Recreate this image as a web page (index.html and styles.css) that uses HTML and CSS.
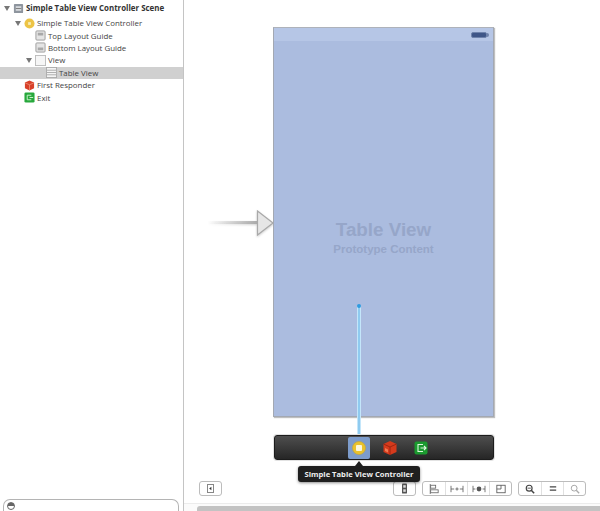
FILE: index.html
```html
<!DOCTYPE html>
<html lang="en">
<head>
    <meta charset="UTF-8">
    <title>Storyboard</title>
    <link rel="stylesheet" href="styles.css">
</head>
<body>
    <aside class="outline">
        <ul class="tree">
            <li class="row row-scene">
                <span class="disclosure"></span>
                <svg class="icon" viewBox="0 0 12 12"><rect x="1" y="1" width="10" height="10" rx="1" fill="#8e959e"/><rect x="3" y="3.5" width="6" height="5" fill="#d5d8dc"/><path d="M3 6h6" stroke="#777" stroke-width="1"/></svg>
                <span class="label">Simple Table View Controller Scene</span>
            </li>
            <li class="row row-controller indent-1">
                <span class="disclosure"></span>
                <svg class="icon" viewBox="0 0 12 12"><circle cx="6" cy="6" r="5.5" fill="#edc445"/><rect x="4.5" y="4.5" width="3" height="3" fill="#f8eeb8"/></svg>
                <span class="label">Simple Table View Controller</span>
            </li>
            <li class="row indent-2">
                <svg class="icon" viewBox="0 0 12 12"><rect x="1" y="1" width="10" height="10" rx="1" fill="#e4e4e4" stroke="#9a9a9a"/><rect x="3" y="3" width="6" height="3" fill="#a8a8a8"/></svg>
                <span class="label">Top Layout Guide</span>
            </li>
            <li class="row indent-2">
                <svg class="icon" viewBox="0 0 12 12"><rect x="1" y="1" width="10" height="10" rx="1" fill="#e4e4e4" stroke="#9a9a9a"/><rect x="3" y="6" width="6" height="3" fill="#a8a8a8"/></svg>
                <span class="label">Bottom Layout Guide</span>
            </li>
            <li class="row indent-view">
                <span class="disclosure"></span>
                <svg class="icon" viewBox="0 0 12 12"><rect x=".5" y=".5" width="11" height="11" fill="#f6f6f6" stroke="#bbb"/></svg>
                <span class="label">View</span>
            </li>
            <li class="row row-selected indent-3">
                <svg class="icon" viewBox="0 0 12 12"><rect x=".5" y=".5" width="11" height="11" fill="#f4f4f4" stroke="#aaa"/><path d="M1 3.5h10M1 6h10M1 8.5h10" stroke="#aaa"/></svg>
                <span class="label">Table View</span>
            </li>
            <li class="row indent-1b">
                <svg class="icon" viewBox="0 0 12 12"><path d="M6 .5l5 2.2v6.4L6 11.5 1 9.1V2.700z" fill="#d8412a"/><path d="M1 3l5 2.200L11 3M6 5.200v6.300" stroke="#f09a80" stroke-width=".8" fill="none"/></svg>
                <span class="label">First Responder</span>
            </li>
            <li class="row indent-1b">
                <svg class="icon" viewBox="0 0 12 12"><rect x=".5" y=".5" width="11" height="11" rx="1.500" fill="#27a83c"/><path d="M8 3.500H3.500v5H8M6 6h4" stroke="#d5f5d5" fill="none"/></svg>
                <span class="label">Exit</span>
            </li>
        </ul>
        <div class="filter">
            <span class="filter-icon"></span>
        </div>
    </aside>

    <main class="editor">
        <div class="canvas">
            <div class="entry-arrow">
                <svg viewBox="0 0 68 28" width="68" height="28">
                    <defs>
                        <linearGradient id="tail" x1="0" x2="1" y1="0" y2="0">
                            <stop offset="0" stop-color="#bbb" stop-opacity="0"/>
                            <stop offset="1" stop-color="#a8a8a8"/>
                        </linearGradient>
                    </defs>
                    <rect x="0" y="12" width="52" height="3" fill="url(#tail)"/>
                    <path d="M50.500 2l15.500 12-15.500 12z" fill="#e6e6e6" stroke="#a9a9a9" stroke-width="1.200"/>
                </svg>
            </div>

            <div class="phone">
                <div class="status-bar"><span class="battery"></span></div>
                <div class="phone-body">
                    <div class="placeholder-title">Table View</div>
                    <div class="placeholder-sub">Prototype Content</div>
                </div>
            </div>

            <div class="segue-line"></div>
            <div class="segue-dot"></div>

            <div class="dock">
                <div class="dock-item dock-selected">
                    <svg viewBox="0 0 16 16" width="16" height="16"><circle cx="8" cy="8" r="6.500" fill="#e9c22e" stroke="#c9a52a" stroke-width=".6"/><rect x="5" y="5" width="6" height="6" rx="1" fill="#fbf7dc"/></svg>
                </div>
                <div class="dock-item">
                    <svg viewBox="0 0 16 16" width="16" height="16"><path d="M8 1l6.500 3v8L8 15l-6.500-3V4z" fill="#d43a1c"/><path d="M1.500 4L8 7l6.500-3M8 7v8" stroke="#8f1f0c" stroke-width=".8" fill="none"/><path d="M3 8l3 1.500v3L3 11z" fill="#f07a52"/></svg>
                </div>
                <div class="dock-item">
                    <svg viewBox="0 0 16 16" width="16" height="16"><rect x="1.500" y="1.500" width="13" height="13" rx="2" fill="#1b9a2f"/><path d="M10 4.500H5v7h5M7.500 8h5M11 6l2 2-2 2" stroke="#dff7df" stroke-width="1.100" fill="none"/></svg>
                </div>
            </div>

            <div class="tooltip">Simple Table View Controller</div>
        </div>

        <div class="toolbar">
            <div class="btn-group">
                <span class="btn btn-single">
                    <svg viewBox="0 0 8 10" width="7" height="9"><rect x=".5" y=".5" width="7" height="9" fill="#fff" stroke="#777"/><path d="M5 3v4L2.500 5z" fill="#333"/></svg>
                </span>
            </div>
            <div class="toolbar-right">
                <div class="btn-group">
                    <span class="btn btn-single">
                        <svg viewBox="0 0 6 12" width="5" height="11"><rect x="0" y="0" width="6" height="12" rx="1" fill="#555"/><rect x="1.500" y="2" width="3" height="3" fill="#ddd"/><rect x="1.500" y="7" width="3" height="3" fill="#ddd"/></svg>
                    </span>
                </div>
                <div class="btn-group">
                    <span class="btn">
                        <svg viewBox="0 0 12 12" width="10" height="10"><path d="M1.500 0v12" stroke="#666"/><rect x="2" y="1.500" width="6" height="3.500" fill="#fff" stroke="#666"/><rect x="2" y="7" width="9" height="3.500" fill="#fff" stroke="#666"/></svg>
                    </span>
                    <span class="btn">
                        <svg viewBox="0 0 16 10" width="14" height="8"><path d="M.500 1v8M15.500 1v8M.500 5h4M11.500 5h4M8 3v4M6 5h4" stroke="#555" fill="none"/></svg>
                    </span>
                    <span class="btn">
                        <svg viewBox="0 0 16 10" width="14" height="8"><path d="M.500 1v8M15.500 1v8M.500 5h3M12.500 5h3" stroke="#555" fill="none"/><circle cx="8" cy="5" r="3" fill="#555"/></svg>
                    </span>
                    <span class="btn">
                        <svg viewBox="0 0 12 12" width="10" height="10"><rect x="1" y="1.500" width="10" height="9" fill="#fff" stroke="#555"/><path d="M1 6h5V1.500" stroke="#555" fill="none"/></svg>
                    </span>
                </div>
                <div class="btn-group">
                    <span class="btn">
                        <svg viewBox="0 0 12 12" width="10" height="10"><circle cx="5" cy="5" r="3.500" fill="none" stroke="#444" stroke-width="1.400"/><path d="M3 5h4" stroke="#444"/><path d="M7.500 7.500L11 11" stroke="#444" stroke-width="1.800"/></svg>
                    </span>
                    <span class="btn">
                        <svg viewBox="0 0 10 6" width="8" height="5"><path d="M1 1h8M1 5h8" stroke="#444" stroke-width="1.400"/></svg>
                    </span>
                    <span class="btn">
                        <svg viewBox="0 0 12 12" width="10" height="10"><circle cx="5" cy="5" r="3.500" fill="none" stroke="#aaa" stroke-width="1.200"/><path d="M7.500 7.500L11 11" stroke="#aaa" stroke-width="1.600"/></svg>
                    </span>
                </div>
            </div>
        </div>

        <div class="scrollbar"><div class="scroll-thumb"></div></div>
    </main>
</body>
</html>
```

FILE: styles.css
```css
* {
    box-sizing: border-box;
    margin: 0;
    padding: 0;
}

html, body {
    height: 100%;
    overflow: hidden;
}

body {
    display: flex;
    width: 600px;
    height: 511px;
    background-color: white;
    font-family: "Open Sans", "DejaVu Sans", sans-serif;
    color: #444;
}

/* left outline */
.outline {
    width: 184px;
    flex-shrink: 0;
    border-right: 1px solid #c4c4c4;
    display: flex;
    flex-direction: column;
    justify-content: space-between;
}

.tree {
    list-style: none;
    padding-top: 2px;
}

.row {
    display: flex;
    align-items: center;
    height: 12.4px;
    font-size: 7.9px;
    white-space: nowrap;
}

.row-scene {
    height: 12px;
    margin-bottom: 3px;
    padding-left: 4px;
    font-weight: bold;
    color: #333;
}

.row-scene .icon {
    margin-left: 3px;
}

.indent-1 {
    padding-left: 15px;
}

.indent-1 .icon {
    margin-left: 3px;
}

.indent-1b {
    padding-left: 24px;
}

.indent-2 {
    padding-left: 35px;
}

.indent-view {
    padding-left: 26px;
}

.indent-view .icon {
    margin-left: 3px;
}

.indent-3 {
    padding-left: 46px;
}

.row-selected {
    background-color: #d0d0d0;
}

.icon {
    width: 11px;
    height: 11px;
    margin-right: 2px;
    flex-shrink: 0;
}

.disclosure {
    width: 0;
    height: 0;
    border-left: 3px solid transparent;
    border-right: 3px solid transparent;
    border-top: 5px solid #777;
    flex-shrink: 0;
}

.filter {
    height: 12px;
    margin: 0 4px 0 3px;
    border: 1px solid #b4b4b4;
    border-bottom: none;
    border-radius: 7px 7px 0 0;
    padding: 2px 0 0 3px;
}

.filter-icon {
    display: block;
    width: 8px;
    height: 8px;
    border-radius: 50%;
    border: 1px solid #666;
    background: linear-gradient(#666 50%, #fff 50%);
}

/* right side */
.editor {
    flex: 1;
    display: flex;
    flex-direction: column;
    min-width: 0;
}

.canvas {
    flex: 1;
    position: relative;
}

.entry-arrow {
    position: absolute;
    left: 23px;
    top: 209px;
    height: 28px;
}

.entry-arrow svg {
    display: block;
    filter: drop-shadow(0 1px 1px rgba(0, 0, 0, 0.2));
}

.phone {
    position: absolute;
    left: 89px;
    top: 27px;
    width: 221px;
    height: 390px;
    background-color: #abbcdf;
    border: 1px solid #a3a8b2;
    border-top-color: #aeb2ba;
    box-shadow: 1px 1px 1px rgba(0, 0, 0, 0.25);
    display: flex;
    flex-direction: column;
}

.status-bar {
    height: 13px;
    background-color: #b6c6e6;
    display: flex;
    justify-content: flex-end;
    align-items: center;
    padding-right: 6px;
}

.battery {
    position: relative;
    width: 16px;
    height: 6px;
    border-radius: 2px;
    background-color: #3f5688;
    border: 1px solid #6f83ac;
}

.battery::after {
    content: "";
    position: absolute;
    right: -3px;
    top: 0;
    width: 2px;
    height: 4px;
    border-radius: 0 2px 2px 0;
    background-color: #6f83ac;
}

.phone-body {
    flex: 1;
    display: flex;
    flex-direction: column;
    align-items: center;
    padding-top: 179px;
    font-family: "Liberation Sans", Arial, sans-serif;
    font-weight: bold;
    color: #96a6c9;
}

.placeholder-title {
    font-size: 18.8px;
    line-height: 20px;
}

.placeholder-sub {
    font-size: 11.5px;
    line-height: 14px;
    margin-top: 2px;
}

.segue-line {
    position: absolute;
    left: 173px;
    top: 306px;
    width: 4px;
    height: 130px;
    background-color: #8fcbf0;
    border-left: 1px solid #c4e6fa;
    border-right: 1px solid #c4e6fa;
}

.segue-dot {
    position: absolute;
    left: 173px;
    top: 304px;
    width: 4px;
    height: 4px;
    border-radius: 50%;
    background-color: #2f9be0;
}

.dock {
    position: absolute;
    left: 90px;
    top: 435px;
    width: 220px;
    height: 25px;
    border-radius: 3px;
    background: linear-gradient(#4e4e4e, #262626);
    border: 1px solid #1c1c1c;
    box-shadow: 0 0 0 1px #e2e2e2;
    display: flex;
    align-items: center;
    gap: 9px;
    padding-left: 73px;
}

.dock-item {
    width: 22px;
    height: 22px;
    display: flex;
    align-items: center;
    justify-content: center;
}

.dock-selected {
    background-color: #7d9ccb;
    border-radius: 2px;
}

.tooltip {
    position: absolute;
    left: 114px;
    top: 466px;
    width: 122px;
    height: 16px;
    border-radius: 3px;
    background-color: #1f1f1f;
    box-shadow: 0 1px 3px rgba(0, 0, 0, 0.45);
    color: #eee;
    font-size: 7.6px;
    font-weight: bold;
    line-height: 16px;
    text-align: center;
    white-space: nowrap;
}

.tooltip::before {
    content: "";
    position: absolute;
    left: 57px;
    top: -5px;
    border-left: 4px solid transparent;
    border-right: 4px solid transparent;
    border-bottom: 5px solid #1f1f1f;
}

.toolbar {
    height: 28px;
    flex-shrink: 0;
    display: flex;
    justify-content: space-between;
    padding: 6px 14px 0 15px;
}

.toolbar-right {
    display: flex;
    gap: 6px;
}

.btn-group {
    display: flex;
    height: 15px;
    border: 1px solid #bcbcbc;
    border-radius: 3px;
    background-color: white;
}

.btn {
    height: 13px;
    width: 22px;
    display: flex;
    align-items: center;
    justify-content: center;
}

.btn + .btn {
    border-left: 1px solid #e0e0e0;
}

.btn-single {
    width: 21px;
}

.scrollbar {
    height: 8px;
    flex-shrink: 0;
    background-color: #fbfbfb;
    border-top: 1px solid #ececec;
    padding: 2px 0 0 13px;
}

.scroll-thumb {
    height: 5px;
    background-color: #c3c3c3;
    border-radius: 3px 0 0 0;
}
```
